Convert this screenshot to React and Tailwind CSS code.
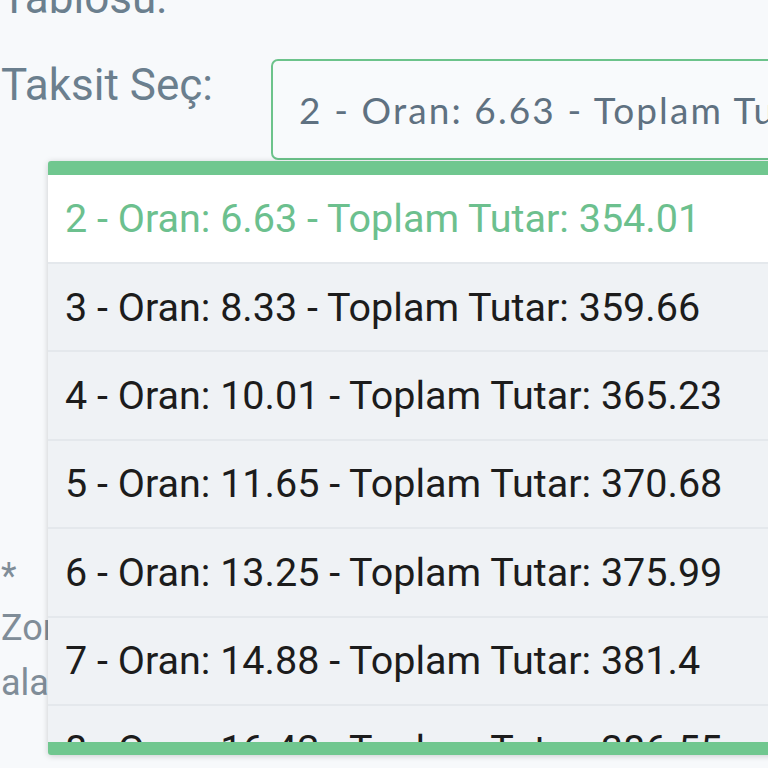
import React from "react";

const rows = [
  "2 - Oran: 6.63 - Toplam Tutar: 354.01",
  "3 - Oran: 8.33 - Toplam Tutar: 359.66",
  "4 - Oran: 10.01 - Toplam Tutar: 365.23",
  "5 - Oran: 11.65 - Toplam Tutar: 370.68",
  "6 - Oran: 13.25 - Toplam Tutar: 375.99",
  "7 - Oran: 14.88 - Toplam Tutar: 381.4",
  "8 - Oran: 16.42 - Toplam Tutar: 386.55",
];

export default function App() {
  return (
    <div className="relative w-[768px] h-[768px] overflow-hidden bg-[#f7f9fb] font-['Roboto',sans-serif]">
      <div className="pl-[1px]">
        <div className="-mt-[28px] text-[44px] leading-[52px] text-[#6b7f8e]">Tablosu:</div>
        <div className="mt-[35px] flex items-start">
          <div className="w-[270px] shrink-0 text-[44px] leading-[52px] text-[#6b7f8e]">Taksit Seç:</div>
          <div className="h-[101px] w-[560px] shrink-0 flex items-center rounded-[7px] border-2 border-[#6cc38b] bg-[#f8fafc] pl-[26px] whitespace-nowrap font-['Lato',sans-serif] text-[37px] tracking-[2.1px] text-[#5f7181]">
            2 - Oran: 6.63 - Toplam Tutar: 354.01
          </div>
        </div>
        <div className="mt-[391px] text-[36px] text-[#808d98]">
          <div className="leading-[50px]">*</div>
          <div className="leading-[55px]">Zorunlu</div>
          <div className="leading-[55px]">alanlar</div>
        </div>
      </div>

      <div className="absolute left-[48px] top-[161px] w-[740px] rounded-[3px] overflow-hidden bg-[#eff2f5] shadow-[0_1px_6px_rgba(0,0,0,0.18)]">
        <div className="h-[14px] bg-[#70c78f]" />
        <div className="h-[567px] overflow-hidden">
          {rows.map((r, i) => (
            <div
              key={i}
              className={
                i === 0
                  ? "h-[87px] flex items-center pl-[17px] bg-white text-[39.5px] text-[#6cc08e] whitespace-nowrap"
                  : "h-[88.4px] flex items-center pl-[17px] border-t-2 border-[#e4e8ec] bg-[#eff2f5] text-[39.5px] text-[#1c1c1c] whitespace-nowrap"
              }
            >
              {r}
            </div>
          ))}
        </div>
        <div className="h-[13px] bg-[#70c78f]" />
      </div>
    </div>
  );
}
